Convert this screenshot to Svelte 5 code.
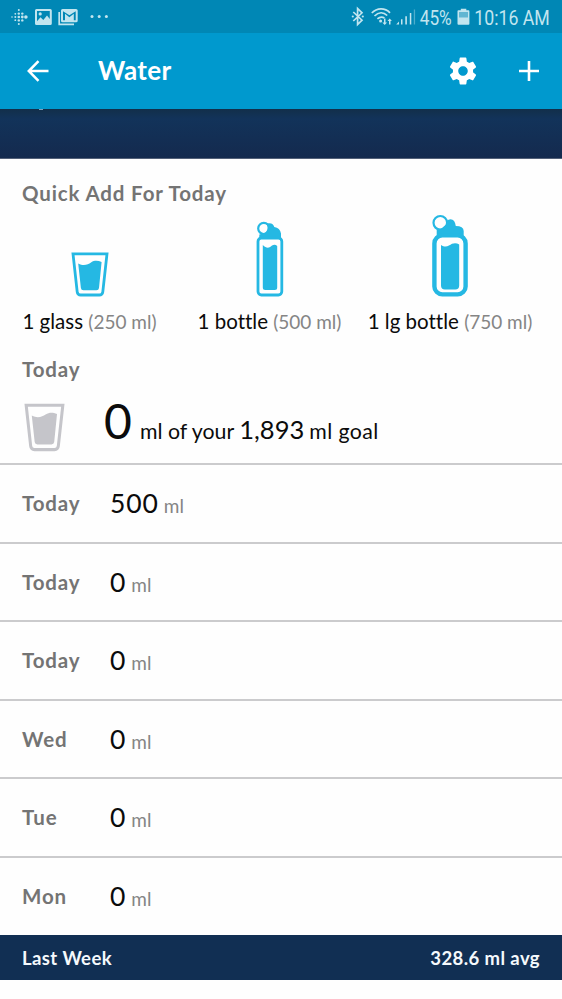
<script lang="ts">
	const quickAdds = [
		{ kind: 'glass', label: '1 glass', amount: '(250 ml)' },
		{ kind: 'bottle', label: '1 bottle', amount: '(500 ml)' },
		{ kind: 'large', label: '1 lg bottle', amount: '(750 ml)' }
	];

	const days = [
		{ day: 'Today', amount: 500 },
		{ day: 'Today', amount: 0 },
		{ day: 'Today', amount: 0 },
		{ day: 'Wed', amount: 0 },
		{ day: 'Tue', amount: 0 },
		{ day: 'Mon', amount: 0 }
	];

	// [x, y, radius] of the tracker logo dots
	const dots = [
		[2, 9, 0.8],
		[5.3, 5.8, 0.9], [5.3, 9, 1], [5.3, 12.2, 0.9],
		[8.8, 2, 1], [8.8, 5.6, 1.2], [8.8, 9, 1.3], [8.8, 12.4, 1.2], [8.8, 16, 1],
		[12.3, 5.6, 1.2], [12.3, 9, 1.4], [12.3, 12.4, 1.2],
		[15.9, 9, 1.8]
	];
</script>

{#snippet glass()}
	<svg class="glass" viewBox="0 0 38 45">
		<path d="M2 1.8H36L31.8 39.8Q31.4 43 28.3 43H9.7Q6.6 43 6.2 39.8Z" fill="none" stroke="currentColor" stroke-width="2.8" />
		<path d="M7.2 11.4C13 14.5 17 12.3 20 10.4C24 8 27 8.7 30.6 10L28 36Q27.7 38.3 25.4 38.3H12.4Q10.2 38.3 9.9 36Z" fill="currentColor" />
	</svg>
{/snippet}

<div class="screen">
	<div class="status">
		<svg class="status-icons" viewBox="0 0 100 20" fill="currentColor">
			{#each dots as [x, y, r]}
				<circle cx={x} cy={y} {r} />
			{/each}
			<path fill-rule="evenodd" d="M26.5 1H40.3Q41.8 1 41.8 2.5V15.5Q41.8 17 40.3 17H26.5Q25 17 25 15.5V2.5Q25 1 26.5 1ZM27 3V13.2L30.5 9.3L33.3 12L37 7.6L39.8 11V3ZM30.2 4.3A1.6 1.6 0 1 1 30.2 7.5A1.6 1.6 0 1 1 30.2 4.3Z" />
			<path fill-rule="evenodd" d="M52.5 1H66Q67.7 1 67.7 2.5V12.7Q67.7 14.2 66 14.2H52.5Q51 14.2 51 12.7V2.5Q51 1 52.5 1ZM53 3.3V12.3H55V5.8L59.4 9.2L63.8 5.8V12.3H65.7V3.3L59.4 7.2Z" />
			<path d="M49.2 4V16.3H64" fill="none" stroke="currentColor" stroke-width="1.7" />
			<circle cx="82" cy="8.5" r="1.5" />
			<circle cx="89.2" cy="8.5" r="1.5" />
			<circle cx="96.4" cy="8.5" r="1.5" />
		</svg>
		<svg class="status-info" viewBox="0 0 200 24" fill="currentColor">
			<path d="M2.3 8L11 16.2L6.6 20.5V4.5L11 8.8L2.3 17" fill="none" stroke="currentColor" stroke-width="1.7" />
			<circle cx="1.8" cy="12.5" r="1.1" />
			<circle cx="11.8" cy="12.5" r="1.1" />
			<g fill="none" stroke="currentColor" stroke-width="1.7">
				<path d="M20.8 9C26 3.5 34 3.5 39 8.8" />
				<path d="M23.5 12C27.5 8 32.5 8 36.2 11.5" />
				<path d="M26.4 14.9C28.8 12.7 31.5 12.7 33.4 14" />
			</g>
			<circle cx="29.6" cy="17" r="1.5" />
			<path d="M33 14.5h1.5v4h1.5l-2.3 2.5l-2.3-2.5h1.6zM38 20.5h1.5v-3.5h1.4l-2.2-2.6l-2.2 2.6h1.5z" />
			<path d="M48 17.5V20.5H45.2ZM50 15.3h1.5v5.2H50zM54.3 12.3h1.6v8.2h-1.6z" />
			<path d="M58.8 9h1.5v11.5h-1.5z" />
			<path opacity=".4" d="M62.8 5.5h1.3v15h-1.3z" />
			<text x="68.7" y="21" font-size="20.5" textLength="32" lengthAdjust="spacingAndGlyphs">45%</text>
			<path opacity=".5" d="M107 7h11v7h-11z" />
			<path d="M109.8 4.7h5.5v1.6h2.2q.9 0 .9.9V19.8q0 .9-.9.9H107.4q-.9 0-.9-.9V7.2q0-.9.9-.9h2.4zM108 8v5.5h9V8z" fill-rule="evenodd" />
			<text x="123.3" y="21" font-size="20.5" textLength="75.5" lengthAdjust="spacingAndGlyphs">10:16 AM</text>
		</svg>
	</div>

	<header>
		<svg class="back" viewBox="0 0 22 22" fill="none" stroke="currentColor" stroke-width="2.5">
			<path d="M21.5 11H2M11.5 1.2L1.8 11L11.5 20.8" />
		</svg>
		<h1>Water</h1>
		<svg class="gear" viewBox="2 2 20 20" fill="currentColor">
			<path d="M19.14 12.94c.04-.3.06-.61.06-.94 0-.32-.02-.64-.07-.94l2.03-1.58c.18-.14.23-.41.12-.61l-1.92-3.32c-.12-.22-.37-.29-.59-.22l-2.39.96c-.5-.38-1.03-.7-1.62-.94l-.36-2.54c-.04-.24-.24-.41-.48-.41h-3.84c-.24 0-.43.17-.47.41l-.36 2.54c-.59.24-1.13.57-1.62.94l-2.39-.96c-.22-.08-.47 0-.59.22L2.74 8.87c-.12.21-.08.47.12.61l2.03 1.58c-.05.3-.09.63-.09.94s.02.64.07.94l-2.03 1.58c-.18.14-.23.41-.12.61l1.92 3.32c.12.22.37.29.59.22l2.39-.96c.5.38 1.03.7 1.62.94l.36 2.54c.05.24.24.41.48.41h3.84c.24 0 .44-.17.47-.41l.36-2.54c.59-.24 1.13-.56 1.62-.94l2.39.96c.22.08.47 0 .59-.22l1.92-3.32c.12-.22.07-.47-.12-.61l-2.01-1.58zM12 15.4c-1.88 0-3.4-1.52-3.4-3.4s1.52-3.4 3.4-3.4 3.4 1.52 3.4 3.4-1.52 3.4-3.4 3.4z" />
		</svg>
		<svg class="plus" viewBox="0 0 20 20" stroke="currentColor" stroke-width="2.6">
			<path d="M10 0V20M0 10H20" />
		</svg>
	</header>

	<div class="banner"></div>

	<section class="quick">
		<h2>Quick Add For Today</h2>
		<div class="options">
			{#each quickAdds as { kind, label, amount }}
				<button type="button" class="option {kind}">
					{#if kind === 'glass'}
						{@render glass()}
					{:else if kind === 'bottle'}
						<svg class="bottle-icon" viewBox="0 0 28 76">
							<circle cx="7.8" cy="7.4" r="5.6" fill="none" stroke="currentColor" stroke-width="2.2" />
							<path d="M3.3 18V13.5L8 12.3Q11.8 10.5 11.5 6L10.5 2.6Q17 0.8 18.3 6Q24 6.8 25 12.5V18Z" fill="currentColor" />
							<rect x="2" y="17" width="23.8" height="57" rx="3.4" fill="none" stroke="currentColor" stroke-width="2.8" />
							<path d="M6.8 24C11 28.5 14 26.5 16 24.5Q19 23 21.2 25V66.5Q21.2 69 18.7 69H9.3Q6.8 69 6.8 66.5Z" fill="currentColor" />
						</svg>
					{:else}
						<svg class="large-icon" viewBox="0 0 36 82">
							<circle cx="8.3" cy="7.8" r="6.8" fill="none" stroke="currentColor" stroke-width="2.2" />
							<path d="M4.7 22V15L9.5 13.5L14 9.5Q14 4.5 18.5 4.2Q23 4.5 23.8 11Q31.5 11 31.7 16V22Z" fill="currentColor" />
							<rect x="2.4" y="20.4" width="31.2" height="59" rx="8" fill="none" stroke="currentColor" stroke-width="4.4" />
							<path d="M9 30C14 33.5 17 30.5 20 28.8Q24 27.5 27.2 29.5V70.5Q27.2 74.5 23.2 74.5H13Q9 74.5 9 70.5Z" fill="currentColor" />
						</svg>
					{/if}
					<span class="caption"><span class="name">{label}</span> <span class="amount">{amount}</span></span>
				</button>
			{/each}
		</div>
	</section>

	<section class="goal">
		<h2>Today</h2>
		<div class="goal-line">
			{@render glass()}
			<p>
				<span class="total">0</span>
				<span class="words">ml of your</span>
				<span class="target">1,893</span>
				<span class="words">ml goal</span>
			</p>
		</div>
	</section>

	<ul>
		{#each days as { day, amount }}
			<li>
				<span class="day">{day}</span>
				<span class="value">{amount}</span>
				<span class="unit">ml</span>
			</li>
		{/each}
	</ul>

	<footer>
		<span>Last Week</span>
		<span>328.6 ml avg</span>
	</footer>
</div>

<style>
	:global(body) {
		margin: 0;
		background: #fff;
	}

	.screen {
		width: 562px;
		height: 999px;
		overflow: hidden;
		font-family: Lato, 'Open Sans', sans-serif;
		font-variant-ligatures: none;
		color: #0b0b0b;
		background: #fefefe;
	}

	svg {
		display: block;
		flex-shrink: 0;
		overflow: visible;
	}

	h1, h2, p, ul {
		margin: 0;
		padding: 0;
	}

	.status {
		display: flex;
		justify-content: space-between;
		height: 33px;
		padding: 0 11px 0 10px;
		box-sizing: border-box;
		background: #0087b5;
		color: #c2e5ef;
	}

	.status-icons {
		width: 100px;
		height: 20px;
		margin-top: 8px;
	}

	.status-info {
		width: 200px;
		height: 24px;
		margin-top: 4px;
		font-family: Roboto, sans-serif;
	}

	header {
		display: flex;
		align-items: center;
		height: 76px;
		padding: 0 23px 0 27px;
		box-sizing: border-box;
		background: #0099ce;
		color: #fff;
	}

	.back {
		width: 22px;
		height: 22px;
	}

	h1 {
		flex: 1;
		margin-left: 49px;
		padding-bottom: 2px;
		font-size: 26px;
		line-height: 32px;
		font-weight: 700;
		letter-spacing: 0.3px;
	}

	.gear {
		width: 28px;
		height: 28px;
		margin-right: 42px;
	}

	.plus {
		width: 20px;
		height: 20px;
	}

	.banner {
		height: 50px;
		background: linear-gradient(#122f4a, #12335a 20%, #142a4e);
		border-bottom: 1px solid #536078;
		box-sizing: border-box;
	}

	/* tip of the chart label still showing under the header */
	.banner::before {
		content: '';
		display: block;
		width: 4px;
		height: 1px;
		margin-left: 39px;
		background: #7fa3bd;
	}

	h2 {
		font-size: 20.5px;
		line-height: 26px;
		font-weight: 700;
		letter-spacing: 0.85px;
		color: #747474;
	}

	.quick {
		height: 175px;
		padding: 21px 22px 0;
		box-sizing: border-box;
	}

	.options {
		display: flex;
		justify-content: space-between;
		height: 139px;
		margin-left: -1px;
		margin-right: 8px;
	}

	.option {
		display: flex;
		flex-direction: column;
		align-items: center;
		justify-content: flex-end;
		width: 137px;
		padding: 0;
		border: 0;
		background: none;
		font: inherit;
		color: #25b8e3;
	}

	.option.bottle {
		width: 143px;
		margin-left: 13px;
	}

	.option.large {
		width: 164px;
	}

	.option .glass {
		width: 38px;
		height: 45px;
	}

	.bottle-icon {
		width: 28px;
		height: 76px;
	}

	.large-icon {
		width: 36px;
		height: 82px;
	}

	.caption {
		margin-top: 11px;
		padding-bottom: 10px;
		font-size: 20.5px;
		line-height: 26px;
		white-space: nowrap;
	}

	.name {
		color: #0b0b0b;
	}

	.amount {
		font-size: 19px;
		color: #858585;
	}

	.goal {
		height: 131px;
		padding: 22px 22px 0;
		box-sizing: border-box;
		border-bottom: 2px solid #cbcbcd;
	}

	.goal-line {
		display: flex;
		align-items: flex-start;
		margin-top: 14px;
		margin-left: 2px;
	}

	.goal-line .glass {
		width: 41px;
		height: 49px;
		margin-top: 7px;
		color: #c5c5ca;
	}

	.goal-line p {
		margin-left: 39px;
		line-height: 50px;
		white-space: nowrap;
	}

	.total {
		margin-right: 4px;
		font-size: 48px;
	}

	.words {
		font-size: 21.3px;
	}

	.target {
		margin: 0 1px;
		font-size: 25.5px;
	}

	.target + .words {
		letter-spacing: 0.4px;
	}

	li {
		display: flex;
		align-items: baseline;
		height: 78.5px;
		box-sizing: border-box;
		padding: 20px 22px 0;
		border-bottom: 2px solid #cbcbcd;
		line-height: 36px;
	}

	li:last-child {
		height: 77.5px;
		border-bottom: 0;
	}

	.day {
		align-self: flex-start;
		width: 88px;
		font-size: 20.5px;
		font-weight: 700;
		letter-spacing: 0.85px;
		color: #747474;
	}

	.value {
		font-size: 26.5px;
		letter-spacing: 0.9px;
	}

	.unit {
		margin-left: 5px;
		font-size: 19px;
		color: #858585;
	}

	footer {
		display: flex;
		justify-content: space-between;
		align-items: center;
		height: 45px;
		padding: 0 22px;
		box-sizing: border-box;
		background: #112f53;
		color: #f5f9fc;
		font-size: 18.5px;
		font-weight: 700;
		letter-spacing: 0.4px;
	}
</style>
